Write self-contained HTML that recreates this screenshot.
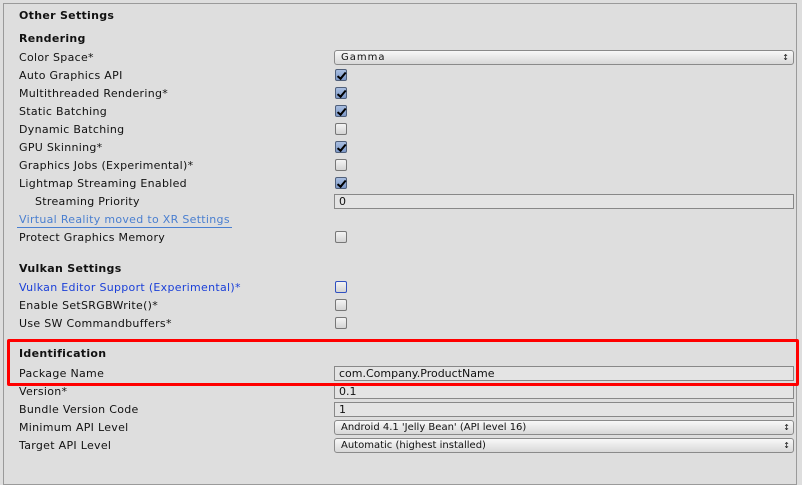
<!DOCTYPE html><html><head><style>
body{margin:0;width:802px;height:471px;background:#dedede;font-family:"DejaVu Sans","Liberation Sans",sans-serif;font-size:11px;color:#111;position:relative;overflow:hidden}
.frame{position:absolute;left:3px;top:3px;width:792px;height:480px;border:1px solid #9a9a9a}
.t{position:absolute;left:19px;line-height:14px;white-space:nowrap;margin-top:1px;letter-spacing:0.3px}
.b{font-weight:bold}
.cb{position:absolute;left:335px;width:10px;height:10px;border:1px solid #777;border-radius:2px;background:linear-gradient(#f4f4f4,#d4d4d4)}
.ck{background:linear-gradient(#a8bee0,#7d98c8);border-color:#4f5f7a}
.ck::after{content:"";position:absolute;left:1px;top:0px;width:3px;height:7px;border:solid #000;border-width:0 2px 2px 0;transform:rotate(40deg) translate(2px,-1px)}
.fld{position:absolute;left:334px;width:454px;height:13px;border:1px solid #888;background:#e4e4e4;padding-left:4px;line-height:14px;box-sizing:content-box}
.dd{position:absolute;left:334px;width:460px;border:1px solid #8a8a8a;border-radius:3px;background:linear-gradient(#f8f8f8,#d8d8d8);font-size:10px;line-height:14px;padding-left:6px;box-sizing:border-box;height:15px}
.dd::after{content:"\2195";position:absolute;right:3px;top:0;font-size:8px}
</style></head><body>
<div class="frame"></div>
<div class="t b" style="top:8px">Other Settings</div>
<div class="t b" style="top:31px">Rendering</div>
<div class="t" style="top:50px">Color Space*</div><div class="dd" style="top:50px;letter-spacing:1px">Gamma</div>
<div class="t" style="top:68px">Auto Graphics API</div><div class="cb ck" style="top:69px"></div>
<div class="t" style="top:86px">Multithreaded Rendering*</div><div class="cb ck" style="top:87px"></div>
<div class="t" style="top:104px">Static Batching</div><div class="cb ck" style="top:105px"></div>
<div class="t" style="top:122px">Dynamic Batching</div><div class="cb" style="top:123px"></div>
<div class="t" style="top:140px">GPU Skinning*</div><div class="cb ck" style="top:141px"></div>
<div class="t" style="top:158px">Graphics Jobs (Experimental)*</div><div class="cb" style="top:159px"></div>
<div class="t" style="top:176px">Lightmap Streaming Enabled</div><div class="cb ck" style="top:177px"></div>
<div class="t" style="top:194px;left:35px">Streaming Priority</div><div class="fld" style="top:194px">0</div>
<div class="t" style="top:212px;color:#4a7fd0;border-bottom:1px solid #4a7fd0;left:17px;padding:0 2px">Virtual Reality moved to XR Settings</div>
<div class="t" style="top:230px">Protect Graphics Memory</div><div class="cb" style="top:231px"></div>
<div class="t b" style="top:261px">Vulkan Settings</div>
<div class="t" style="top:280px;color:#1a3fd8">Vulkan Editor Support (Experimental)*</div><div class="cb" style="top:281px;border-color:#3050c0"></div>
<div class="t" style="top:298px">Enable SetSRGBWrite()*</div><div class="cb" style="top:299px"></div>
<div class="t" style="top:316px">Use SW Commandbuffers*</div><div class="cb" style="top:317px"></div>
<div class="t b" style="top:346px">Identification</div>
<div class="t" style="top:366px">Package Name</div><div class="fld" style="top:366px">com.Company.ProductName</div>
<div class="t" style="top:384px">Version*</div><div class="fld" style="top:384px">0.1</div>
<div class="t" style="top:402px">Bundle Version Code</div><div class="fld" style="top:402px">1</div>
<div class="t" style="top:420px">Minimum API Level</div><div class="dd" style="top:420px">Android 4.1 'Jelly Bean' (API level 16)</div>
<div class="t" style="top:438px">Target API Level</div><div class="dd" style="top:438px">Automatic (highest installed)</div>
<div style="position:absolute;left:7px;top:339px;width:786px;height:41px;border:3px solid #f00;border-radius:2px"></div>
</body></html>
